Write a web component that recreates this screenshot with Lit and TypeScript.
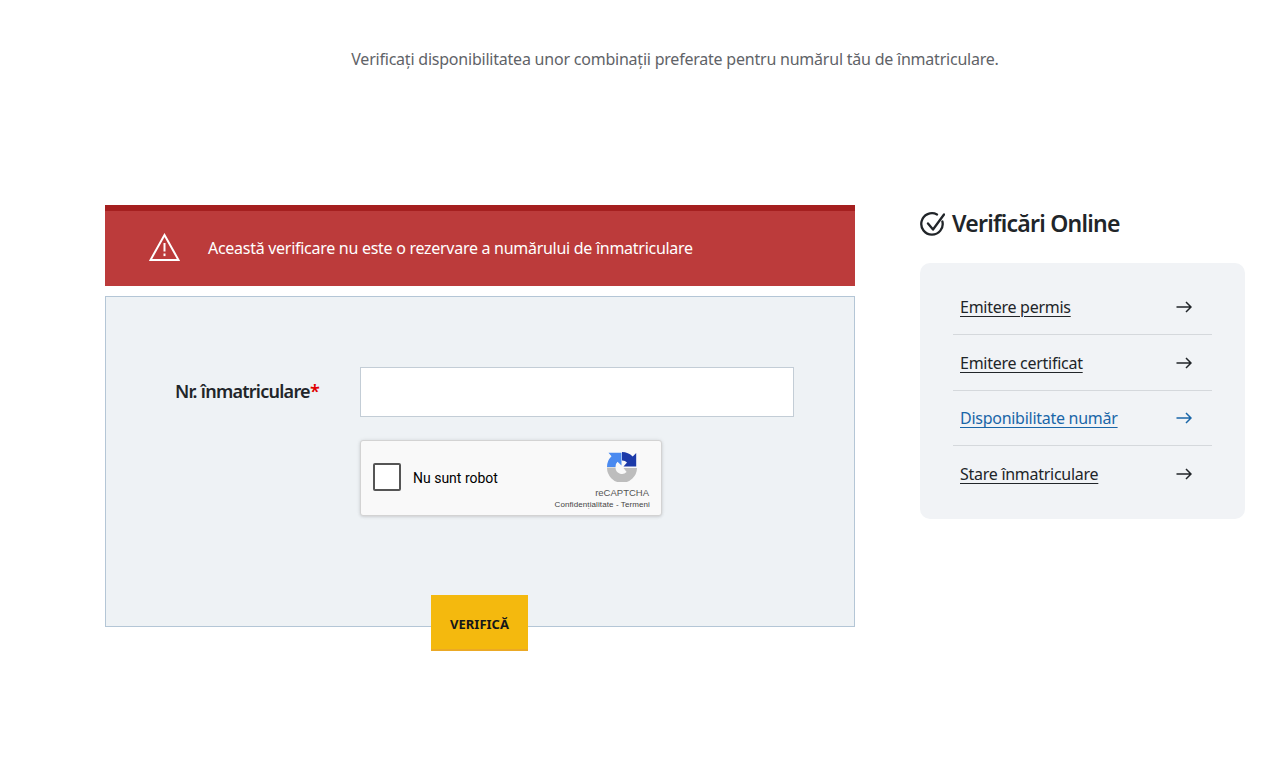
import { LitElement, html, css } from "lit";
import { customElement } from "lit/decorators.js";

const arrow = html`<svg class="arrow" viewBox="0 0 16 12" width="16" height="12" aria-hidden="true"><path d="M0.5 6H15M10 1l5 5-5 5" fill="none" stroke="currentColor" stroke-width="1.5"/></svg>`;

const links = [
  { label: "Emitere permis", active: false },
  { label: "Emitere certificat", active: false },
  { label: "Disponibilitate număr", active: true },
  { label: "Stare înmatriculare", active: false },
];

@customElement("app-root")
export class AppRoot extends LitElement {
  static styles = css`
    :host {
      display: block;
      min-height: 768px;
      background: #fff;
      font-family: "Noto Sans", "Liberation Sans", sans-serif;
      color: #212529;
      font-size: 16px;
    }
    .page {
      width: 1140px;
      margin-left: 105px;
      padding-top: 48px;
    }
    .subtitle {
      margin: 0;
      height: 22px;
      line-height: 22px;
      text-align: center;
      color: #5f6368;
      letter-spacing: -0.22px;
    }
    .columns {
      display: flex;
      gap: 65px;
      margin-top: 135px;
      align-items: flex-start;
    }
    .left {
      width: 750px;
      flex: none;
    }
    .alert {
      box-sizing: border-box;
      height: 81px;
      background: #bc3b3b;
      border-top: 6px solid #a51f1f;
      color: #fff;
      display: flex;
      align-items: center;
      gap: 28px;
      padding: 0 0 2px 44px;
      letter-spacing: -0.28px;
    }
    .alert svg {
      display: block;
      margin-top: -2px;
    }
    .form {
      box-sizing: border-box;
      height: 331px;
      margin-top: 10px;
      background: #eef2f5;
      border: 1px solid #b4c6d6;
      display: flex;
      flex-direction: column;
      padding-top: 70px;
    }
    .field {
      display: flex;
      align-items: center;
    }
    .label {
      width: 254px;
      box-sizing: border-box;
      text-align: right;
      padding: 0 41px 2px 0;
      font-weight: 600;
      font-size: 18px;
      letter-spacing: -0.74px;
    }
    .label span {
      color: #e00000;
    }
    .input {
      box-sizing: border-box;
      width: 434px;
      height: 50px;
      background: #fff;
      border: 1px solid #c3cdd6;
      display: block;
      padding: 0 12px;
      font: inherit;
    }
    .captcha {
      box-sizing: border-box;
      margin: 23px 0 0 254px;
      width: 302px;
      height: 76px;
      background: #f9f9f9;
      border: 1px solid #d3d3d3;
      border-radius: 3px;
      box-shadow: 0 0 4px rgba(0, 0, 0, 0.08), 0 1px 3px rgba(0, 0, 0, 0.1);
      display: flex;
      font-family: Roboto, "Liberation Sans", sans-serif;
      color: #000;
    }
    .check {
      box-sizing: border-box;
      width: 28px;
      height: 28px;
      margin: 22px 0 0 12px;
      background: #fff;
      border: 2px solid #555;
      border-radius: 2px;
      flex: none;
    }
    .robot {
      margin: 0 0 0 12px;
      font-size: 14px;
      line-height: 74px;
      flex: 1;
      height: 74px;
    }
    .brand {
      width: 100px;
      flex: none;
      display: flex;
      flex-direction: column;
      align-items: flex-end;
      padding-top: 11px;
      box-sizing: border-box;
      margin-right: 11px;
    }
    .brand svg {
      display: block;
      margin-right: 13px;
    }
    .brand .name {
      font-size: 9.5px;
      line-height: 12px;
      color: #555;
      margin: 5px 1px 0 0;
      font-family: "Liberation Sans", sans-serif;
    }
    .brand .terms {
      font-size: 8px;
      line-height: 10px;
      color: #444;
      margin-top: 1px;
      white-space: nowrap;
      letter-spacing: 0.1px;
      font-family: "Liberation Sans", sans-serif;
    }
    .submit {
      margin: auto 0 -25px 325px;
      box-sizing: border-box;
      width: 97px;
      height: 56px;
      background: #f4b90e;
      border: 0;
      border-bottom: 2px solid #eba925;
      color: #14171a;
      font-family: inherit;
      font-size: 13px;
      font-weight: 700;
      letter-spacing: 0;
      padding: 3px 0 0;
    }
    .right {
      width: 325px;
      flex: none;
    }
    .heading {
      display: flex;
      align-items: center;
      gap: 7px;
      box-sizing: border-box;
      height: 38px;
      padding-bottom: 2px;
      margin: 0 0 20px;
      font-size: 23px;
      font-weight: 600;
      letter-spacing: -0.75px;
    }
    .heading svg {
      display: block;
      flex: none;
    }
    .card {
      background: #f1f3f6;
      border-radius: 10px;
      padding: 16.5px 33px 17px;
    }
    .row {
      display: flex;
      align-items: center;
      justify-content: space-between;
      height: 55.6px;
      box-sizing: border-box;
      border-bottom: 1px solid #d5d8dc;
      padding: 1px 20px 0 7px;
      color: #212529;
      letter-spacing: -0.27px;
    }
    .row:last-child {
      border-bottom-color: transparent;
    }
    .row a {
      color: inherit;
      text-decoration: underline;
      text-underline-offset: 3px;
    }
    .row.active {
      color: #1a66a8;
    }
    .arrow {
      display: block;
      flex: none;
    }
  `;

  render() {
    return html`
      <div class="page">
        <p class="subtitle">Verificați disponibilitatea unor combinații preferate pentru numărul tău de înmatriculare.</p>
        <div class="columns">
          <div class="left">
            <div class="alert">
              <svg width="31" height="28" viewBox="0 0 31 28" aria-hidden="true">
                <path d="M15.5 2 L29.5 27 H1.5 Z" fill="none" stroke="#fff" stroke-width="2"/>
                <path d="M15.5 10v8.5" stroke="#fff" stroke-width="2"/>
                <path d="M15.5 20.5v2.6" stroke="#fff" stroke-width="2"/>
              </svg>
              <span>Această verificare nu este o rezervare a numărului de înmatriculare</span>
            </div>
            <div class="form">
              <div class="field">
                <label class="label">Nr. înmatriculare<span>*</span></label>
                <input class="input" type="text" />
              </div>
              <div class="captcha">
                <div class="check"></div>
                <div class="robot">Nu sunt robot</div>
                <div class="brand">
                  <svg width="30" height="30" viewBox="0 0 30 30" aria-hidden="true">
                    <path d="M0 15A15 15 0 0 1 4.5 4.3L1.5 .8H14.5V13.5L10.5 9.8A6.5 6.5 0 0 0 8.5 15Z" fill="#4a8af0"/>
                    <path d="M15 0A15 15 0 0 1 25.7 4.5L29.2 1V14.5H16.5L20 10.5A6.5 6.5 0 0 0 15 8.5Z" fill="#1c3aa9"/>
                    <path d="M0 15.5H8.5A6.5 6.5 0 0 0 19.6 20L16.5 16H30A15 15 0 0 1 0 15.5Z" fill="#bdbdbd"/>
                  </svg>
                  <div class="name">reCAPTCHA</div>
                  <div class="terms">Confidențialitate - Termeni</div>
                </div>
              </div>
              <button class="submit">VERIFICĂ</button>
            </div>
          </div>
          <div class="right">
            <h2 class="heading">
              <svg width="25" height="25" viewBox="0 0 25 25" aria-hidden="true">
                <path d="M22.4 10.5A10.7 10.7 0 1 1 17 3.5" fill="none" stroke="#212529" stroke-width="2.3" stroke-linecap="round"/>
                <path d="M8 12.5l5 6L24 3.5" fill="none" stroke="#212529" stroke-width="2.3" stroke-linecap="round" stroke-linejoin="round"/>
              </svg>
              Verificări Online
            </h2>
            <div class="card">
              ${links.map(
                (l) => html`<div class="row ${l.active ? "active" : ""}">
                  <a href="#">${l.label}</a>${arrow}
                </div>`
              )}
            </div>
          </div>
        </div>
      </div>
    `;
  }
}
